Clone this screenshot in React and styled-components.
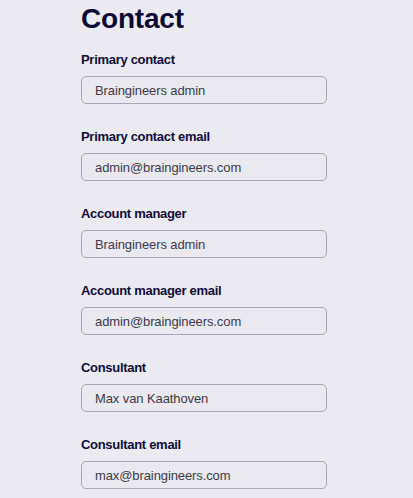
import React from 'react';
import styled, { createGlobalStyle } from 'styled-components';

const GlobalStyle = createGlobalStyle`
  html, body {
    margin: 0;
    padding: 0;
    background: #ebeaf0;
  }
  body {
    font-family: "Liberation Sans", Arial, sans-serif;
  }
`;

const Page = styled.div`
  padding: 3px 0 0 81px;
  min-height: 100vh;
  box-sizing: border-box;
`;

const Title = styled.h1`
  margin: 0 0 17px;
  font-size: 28px;
  line-height: 32px;
  font-weight: 700;
  color: #0c0a32;
  letter-spacing: -0.2px;
`;

const Field = styled.div`
  display: flex;
  flex-direction: column;
  margin-bottom: 25px;
`;

const Label = styled.label`
  font-size: 13px;
  line-height: 16px;
  font-weight: 700;
  color: #0f0c38;
  letter-spacing: -0.3px;
  margin-bottom: 8px;
`;

const Input = styled.input`
  box-sizing: border-box;
  width: 246px;
  height: 28px;
  padding: 0 13px;
  border: 1px solid #a9a7b7;
  border-radius: 5px;
  background: #eae9f0;
  font-family: "Liberation Sans", Arial, sans-serif;
  font-size: 13px;
  color: #3c3a48;
  letter-spacing: -0.1px;
  outline: none;
`;

const fields = [
  { label: 'Primary contact', value: 'Braingineers admin' },
  { label: 'Primary contact email', value: 'admin@braingineers.com' },
  { label: 'Account manager', value: 'Braingineers admin' },
  { label: 'Account manager email', value: 'admin@braingineers.com' },
  { label: 'Consultant', value: 'Max van Kaathoven' },
  { label: 'Consultant email', value: 'max@braingineers.com' },
];

const App = () => {
  return (
    <>
      <GlobalStyle />
      <Page>
        <Title>Contact</Title>
        {fields.map((field, index) => (
          <Field key={index}>
            <Label htmlFor={`field-${index}`}>{field.label}</Label>
            <Input id={`field-${index}`} readOnly defaultValue={field.value} />
          </Field>
        ))}
      </Page>
    </>
  );
};

export default App;
